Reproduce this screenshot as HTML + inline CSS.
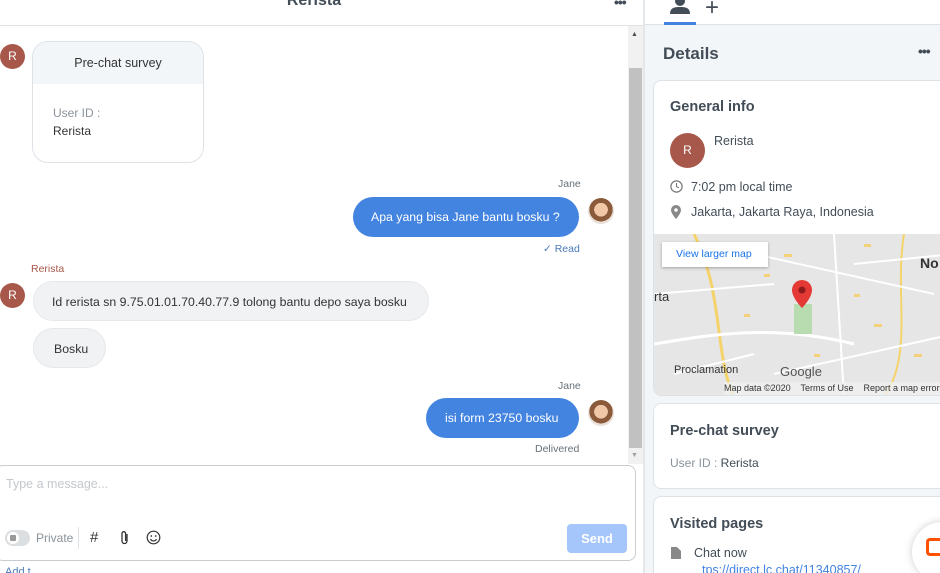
<!DOCTYPE html>
<html><head><meta charset="utf-8"><style>
*{box-sizing:border-box;margin:0;padding:0}
html,body{width:940px;height:573px;overflow:hidden}
body{position:relative;font-family:"Liberation Sans",sans-serif;background:#fff;color:#424d57}
.a{position:absolute}
.av{position:absolute;width:25px;height:25px;border-radius:50%;background:#a8584a;color:#fff;font-size:12px;text-align:center;line-height:25px}
.bub{position:absolute;border-radius:20px;font-size:12.3px;height:40px;line-height:40px;padding:0 18px;white-space:nowrap}
.out{background:#4384e0;color:#fff}
.in{background:#f1f2f4;color:#333;border:1px solid #e6e8eb}
.sm{position:absolute;font-size:10.5px;color:#677179}
.face{position:absolute;width:26px;height:26px;border-radius:50%;background:radial-gradient(circle at 50% 45%,#f0c8a8 0 35%,#8a5a3a 36% 60%,#e8e0d8 61%)}
.card{position:absolute;left:653px;width:300px;background:#fff;border:1px solid #dde2e7;border-radius:8px}
h3{font-size:14.5px;color:#424d57;font-weight:bold}
</style></head><body>
<div class="a" style="left:0;top:-8px;width:628px;text-align:center;font-size:16px;font-weight:bold;color:#424d57">Rerista</div>
<div class="a" style="left:614px;top:-6px;font-size:14px;font-weight:bold;letter-spacing:-1px">•••</div>
<div class="a" style="left:0;top:25px;width:643px;height:1px;background:#dde2e7"></div>
<div class="a" style="left:628px;top:26px;width:15px;height:438px;background:#f1f1f1"></div>
<div class="a" style="left:629px;top:68px;width:13px;height:380px;background:#c1c1c1"></div>
<div class="a" style="left:631px;top:31px;font-size:7px;color:#505050">▲</div>
<div class="a" style="left:631px;top:452px;font-size:7px;color:#a0a0a0">▼</div>
<div class="a" style="left:643px;top:0;width:2px;height:573px;background:#e4e7ea"></div>

<div class="av" style="left:0;top:44px">R</div>
<div class="a" style="left:32px;top:41px;width:172px;height:122px;border:1px solid #dde2e7;border-radius:16px;overflow:hidden">
<div style="background:#f3f6f9;height:42px;line-height:42px;text-align:center;font-size:12.5px;color:#333">Pre-chat survey</div>
<div style="padding:22px 0 0 20px;font-size:12px;color:#8a939b">User ID :</div>
<div style="padding:4px 0 0 20px;font-size:12px;color:#333">Rerista</div>
</div>

<div class="sm" style="left:558px;top:178px">Jane</div>
<div class="bub out" style="left:353px;top:197px;width:226px">Apa yang bisa Jane bantu bosku ?</div>
<div class="face" style="left:588px;top:198px"></div>
<div class="sm" style="left:543px;top:243px;color:#4a7ab8">✓ Read</div>

<div class="sm" style="left:31px;top:263px;color:#a8584a">Rerista</div>
<div class="av" style="left:0;top:283px">R</div>
<div class="bub in" style="left:33px;top:281px;width:396px;border-radius:20px">Id rerista sn 9.75.01.01.70.40.77.9 tolong bantu depo saya bosku</div>
<div class="bub in" style="left:33px;top:328px;width:73px;padding:0 20px">Bosku</div>

<div class="sm" style="left:558px;top:380px">Jane</div>
<div class="bub out" style="left:426px;top:398px;width:153px;padding:0 19px">isi form 23750 bosku</div>
<div class="face" style="left:588px;top:400px"></div>
<div class="sm" style="left:535px;top:443px">Delivered</div>

<div class="a" style="left:-5px;top:465px;width:641px;height:96px;border:1px solid #c8cdd2;border-radius:8px"></div>
<div class="a" style="left:6px;top:477px;font-size:12.5px;color:#c4c8cc">Type a message...</div>
<div class="a" style="left:5px;top:530px;width:25px;height:16px;border-radius:8px;background:#dcdfe2"></div>
<div class="a" style="left:7px;top:532px;width:12px;height:12px;border-radius:50%;background:#fff"></div>
<div class="a" style="left:10px;top:535px;width:6px;height:6px;border-radius:1px;background:#999"></div>
<div class="a" style="left:36px;top:531px;font-size:12px;color:#8a939b">Private</div>
<div class="a" style="left:78px;top:527px;width:1px;height:22px;background:#dde2e7"></div>
<div class="a" style="left:90px;top:529px;font-size:15px;color:#333">#</div>
<svg class="a" style="left:118px;top:530px" width="14" height="16" viewBox="0 0 14 16"><path d="M9 4v7a2.5 2.5 0 0 1-5 0V3.5a1.8 1.8 0 0 1 3.6 0V11" fill="none" stroke="#333" stroke-width="1.3"/></svg>
<svg class="a" style="left:146px;top:530px" width="15" height="15" viewBox="0 0 15 15"><circle cx="7.5" cy="7.5" r="6.3" fill="none" stroke="#333" stroke-width="1.2"/><circle cx="5.3" cy="6" r=".9" fill="#333"/><circle cx="9.7" cy="6" r=".9" fill="#333"/><path d="M4.5 9a3.3 3.3 0 0 0 6 0" fill="none" stroke="#333" stroke-width="1.2"/></svg>
<div class="a" style="left:567px;top:524px;width:60px;height:29px;border-radius:4px;background:#a4c6fb;color:#fff;font-size:13px;font-weight:bold;text-align:center;line-height:29px">Send</div>
<div class="a" style="left:5px;top:566px;font-size:11px;color:#4a7ab8">Add t</div>

<div class="a" style="left:645px;top:0;width:295px;height:573px;background:#f3f6f9"></div>
<div class="a" style="left:645px;top:0;width:295px;height:25px;background:#fff;border-bottom:1px solid #dde2e7"></div>
<svg class="a" style="left:668px;top:0" width="24" height="14" viewBox="0 0 24 14"><circle cx="12" cy="1" r="5" fill="#424d57"/><path d="M2 14c0-6 4-7 10-7s10 1 10 7z" fill="#424d57"/></svg>
<div class="a" style="left:664px;top:22px;width:32px;height:3px;background:#4384e0"></div>
<div class="a" style="left:705px;top:-6px;font-size:24px;color:#424d57">+</div>
<div class="a" style="left:663px;top:44px;font-size:17px;font-weight:bold;color:#424d57">Details</div>
<div class="a" style="left:918px;top:43px;font-size:14px;font-weight:bold;letter-spacing:-1px">•••</div>

<div class="card" style="top:80px;height:316px;overflow:hidden">
<h3 style="position:absolute;left:16px;top:18px">General info</h3>
<div class="av" style="left:16px;top:52px;width:35px;height:35px;line-height:35px">R</div>
<div class="a" style="left:60px;top:53px;font-size:12.5px;color:#424d57">Rerista</div>
<svg class="a" style="left:16px;top:99px" width="13" height="13" viewBox="0 0 13 13"><circle cx="6.5" cy="6.5" r="5.6" fill="none" stroke="#777" stroke-width="1.2"/><path d="M6.5 3v3.5l2.3 1.5" fill="none" stroke="#777" stroke-width="1.1"/></svg>
<div class="a" style="left:37px;top:99px;font-size:12.5px;color:#424d57">7:02 pm local time</div>
<svg class="a" style="left:17px;top:124px" width="10" height="14" viewBox="0 0 10 14"><path d="M5 0a5 5 0 0 0-5 5c0 3.5 5 9 5 9s5-5.5 5-9a5 5 0 0 0-5-5z" fill="#888"/><circle cx="5" cy="5" r="1.8" fill="#fff"/></svg>
<div class="a" style="left:37px;top:124px;font-size:12.5px;color:#424d57">Jakarta, Jakarta Raya, Indonesia</div>
<svg class="a" style="left:0;top:153px" width="300" height="163" viewBox="0 0 300 163">
<rect width="300" height="163" fill="#e6e6e6"/>
<path d="M40 0 C70 60 60 120 80 163" stroke="#f5d36b" stroke-width="3" fill="none"/>
<path d="M0 110 C60 100 120 90 200 110" stroke="#fff" stroke-width="3" fill="none"/>
<path d="M250 0 C240 60 260 120 230 163" stroke="#f5d36b" stroke-width="2" fill="none"/>
<path d="M100 20 L280 60 M120 140 L300 100 M180 0 L190 163 M0 60 L120 50 M200 30 L300 20 M20 140 L100 120" stroke="#fff" stroke-width="2" fill="none"/>
<g fill="#f3d27a"><rect x="110" y="40" width="6" height="3"/><rect x="130" y="20" width="8" height="3"/><rect x="200" y="60" width="6" height="3"/><rect x="220" y="90" width="8" height="3"/><rect x="90" y="80" width="6" height="3"/><rect x="260" y="120" width="8" height="3"/><rect x="160" y="120" width="6" height="3"/><rect x="210" y="10" width="7" height="3"/></g>
<rect x="140" y="70" width="18" height="30" fill="#b8dcb0"/>
<path d="M148 46a10 10 0 0 0-10 10c0 8 10 18 10 18s10-10 10-18a10 10 0 0 0-10-10z" fill="#e53935"/><circle cx="148" cy="56" r="3.5" fill="#8e1a1a"/>
<rect x="70" y="148" width="230" height="15" fill="#f0f0f0" opacity=".8"/>
</svg>
<div class="a" style="left:8px;top:161px;width:106px;height:25px;background:#fff;font-size:10.5px;color:#1a73e8;line-height:25px;padding-left:14px;box-shadow:0 1px 3px rgba(0,0,0,.3)">View larger map</div>
<div class="a" style="left:266px;top:174px;font-size:14px;font-weight:bold;color:#333">No</div>
<div class="a" style="left:0;top:208px;font-size:13px;color:#333">rta</div>
<div class="a" style="left:20px;top:283px;font-size:11px;color:#333">Proclamation</div>
<div class="a" style="left:126px;top:283px;font-size:13px;color:#555">Google</div>
<div class="a" style="left:70px;top:302px;font-size:9px;color:#333;white-space:nowrap">Map data ©2020 &nbsp;&nbsp; Terms of Use &nbsp;&nbsp; Report a map error</div>
</div>

<div class="card" style="top:403px;height:86px">
<h3 style="position:absolute;left:16px;top:19px">Pre-chat survey</h3>
<div class="a" style="left:16px;top:52px;font-size:12px;color:#8a939b">User ID : <span style="color:#424d57">Rerista</span></div>
</div>

<div class="card" style="top:496px;height:100px">
<h3 style="position:absolute;left:16px;top:19px">Visited pages</h3>
<svg class="a" style="left:17px;top:50px" width="10" height="12" viewBox="0 0 10 12"><path d="M0 0h6l4 4v8H0z" fill="#888"/></svg>
<div class="a" style="left:40px;top:49px;font-size:12.5px;color:#424d57">Chat now</div>
<div class="a" style="left:48px;top:66px;font-size:12.5px;color:#4384e0">tps://direct.lc.chat/11340857/</div>
</div>
<div class="a" style="left:912px;top:522px;width:60px;height:60px;border-radius:50%;background:#fff;box-shadow:0 0 8px rgba(0,0,0,.2)"></div>
<div class="a" style="left:926px;top:538px;width:14px;height:18px;border:3px solid #ff5100;border-right:none;border-radius:4px 0 0 4px"></div>
</body></html>
